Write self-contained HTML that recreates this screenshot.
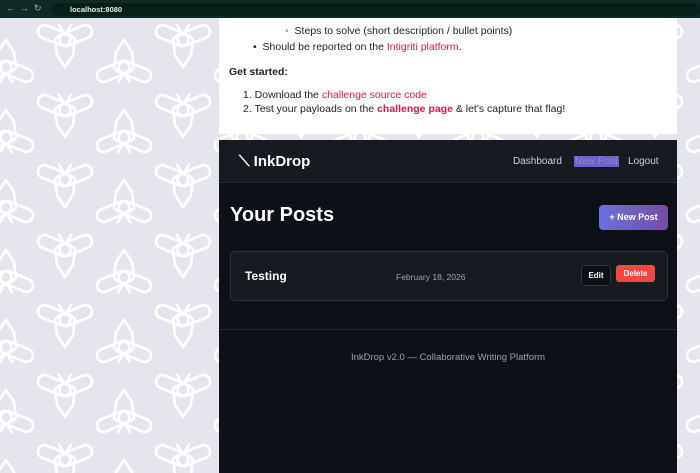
<!DOCTYPE html>
<html><head><style>
*{margin:0;padding:0;box-sizing:border-box}
body{width:700px;height:473px;overflow:hidden;position:relative;background:#e5e5ee;font-family:"Liberation Sans",sans-serif}
#bg{position:absolute;left:0;top:18px;width:700px;height:455px}
.bar{position:absolute;left:0;top:0;width:700px;height:18px;background:#0f2a25}
.url{position:absolute;left:52px;top:3px;width:648px;height:13px;background:#062019;border-radius:7px;color:#e8eeec;font-size:7.5px;font-weight:bold;line-height:13px;padding-left:18px}
.white{position:absolute;left:219px;top:18px;width:458px;height:116px;background:#fff;font-size:10.5px;color:#222}
.white .r{color:#e8134f}
.dark{position:absolute;left:219px;top:140px;width:458px;height:333px;background:#0d1117;color:#e6edf3}
.nav{height:43px;background:#161b22;border-bottom:1px solid #262c36;position:relative}
.logo{position:absolute;left:20px;top:13px;font-size:15px;font-weight:bold;color:#fff}
.nav a{position:absolute;top:16px;font-size:10px;color:#c9d1d9}
h1{position:absolute;left:11px;top:64px;font-size:20px;font-weight:bold;color:#fff}
.btn{position:absolute;left:380px;top:65px;width:69px;height:25px;border-radius:4px;background:linear-gradient(90deg,#6a72e0,#764ba2);color:#fff;font-size:9px;font-weight:bold;text-align:center;line-height:25px}
.card{position:absolute;left:11px;top:111px;width:438px;height:50px;background:#161b22;border:1px solid #2a303a;border-radius:5px}
.foot{position:absolute;left:0;top:189px;width:458px;border-top:1px solid #262c36;text-align:center;font-size:9.5px;color:#9aa2ad;padding-top:22px}
</style></head><body>
<svg id="bg" xmlns="http://www.w3.org/2000/svg"><defs>
<g id="b" fill="none" stroke="#fff" stroke-width="2.6" stroke-linecap="round" stroke-linejoin="round">
<path d="M-6 -22 L-1 -14 M6 -22 L1 -14"/>
<path d="M-10 -8 Q0 -18 10 -8 L8 8 L0 20 L-8 8 Z"/>
<rect x="-28" y="-18" width="34" height="13" rx="6.5" transform="rotate(22 -11 -11)"/>
<rect x="-6" y="-18" width="34" height="13" rx="6.5" transform="rotate(-22 11 -11)"/>
</g>
<pattern id="p" width="118" height="70" patternUnits="userSpaceOnUse">
<use href="#b" x="65" y="29"/><use href="#b" x="65" y="99"/>
<use href="#b" transform="translate(6 42) rotate(180)"/>
<use href="#b" transform="translate(124 42) rotate(180)"/>
<use href="#b" transform="translate(6 -28) rotate(180)"/>
<use href="#b" transform="translate(124 -28) rotate(180)"/>
</pattern></defs>
<rect width="700" height="455" fill="url(#p)"/></svg>
<div class="bar"><span style="position:absolute;left:6px;top:3px;color:#9fb3ae;font-size:9px">←&nbsp;&nbsp;→&nbsp;&nbsp;↻</span><div class="url">localhost:8080</div></div>
<div class="white">
<div style="position:absolute;left:66px;top:7px">◦&nbsp; Steps to solve (short description / bullet points)</div>
<div style="position:absolute;left:34px;top:23px">•&nbsp; Should be reported on the <span class="r">Intigriti platform</span>.</div>
<div style="position:absolute;left:10px;top:48px;font-weight:bold">Get started:</div>
<div style="position:absolute;left:24px;top:71px">1. Download the <span class="r">challenge source code</span></div>
<div style="position:absolute;left:24px;top:85px">2. Test your payloads on the <b class="r">challenge page</b> &amp; let's capture that flag!</div>
</div>
<div class="dark">
<div class="nav"><div class="logo">⟍ InkDrop</div>
<a style="left:294px">Dashboard</a><a style="left:355px;background:#6a62c8;color:#8a8ad0;padding:0 1px">New Post</a><a style="left:409px">Logout</a></div>
<h1>Your Posts</h1>
<div class="btn">+ New Post</div>
<div class="card">
<div style="position:absolute;left:14px;top:17px;font-size:12px;font-weight:bold;color:#fff">Testing</div>
<div style="position:absolute;left:165px;top:20px;font-size:8.5px;color:#9aa2ad">February 18, 2026</div>
<div style="position:absolute;left:350px;top:13px;width:30px;height:21px;border:1px solid #30363d;border-radius:3px;background:#0d1117;font-size:8px;color:#fff;text-align:center;line-height:19px;font-weight:bold">Edit</div>
<div style="position:absolute;left:385px;top:13px;width:39px;height:17px;border-radius:3px;background:#f0473f;font-size:8px;color:#fff;text-align:center;line-height:17px;font-weight:bold">Delete</div>
</div>
<div class="foot">InkDrop v2.0 — Collaborative Writing Platform</div>
</div>
</body></html>
